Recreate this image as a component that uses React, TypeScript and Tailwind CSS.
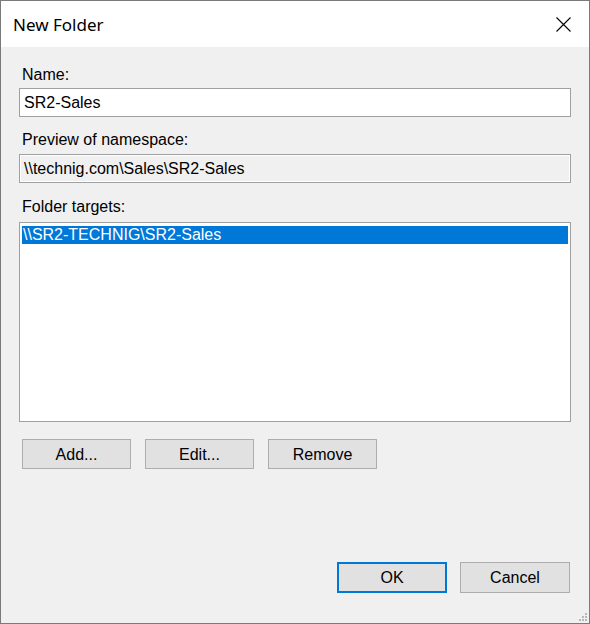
export default function App() {
  const font = { fontFamily: '"Liberation Sans", Arial, sans-serif' };

  return (
    <div
      className="w-[590px] h-[624px] flex flex-col border border-[#7a7a7a] bg-[#f0f0f0] text-black text-[16px] leading-[18px]"
      style={font}
    >
      {/* Title bar */}
      <div className="h-[46px] bg-white flex items-center justify-between pl-[12px] pr-[18px]">
        <span className="text-[17px] pt-[1px]" style={{ fontFamily: '"Noto Sans", "Open Sans", sans-serif' }}>
          New Folder
        </span>
        <svg width="15" height="15" viewBox="0 0 15 15" className="mt-[1px]">
          <path d="M0.5 0.5 L14.5 14.5 M14.5 0.5 L0.5 14.5" stroke="#000" strokeWidth="1.1" fill="none" />
        </svg>
      </div>

      {/* Body */}
      <div className="flex-1 flex flex-col pl-[18px] pr-[18px] pt-[19px] pb-[30px]">
        <label className="pl-[3px]">Name:</label>
        <div className="mt-[4px] h-[29px] bg-white border border-[#a0a0a0] flex items-center pl-[4px] pt-[1px]">
          SR2-Sales
        </div>

        <label className="pl-[3px] mt-[14px]">Preview of namespace:</label>
        <div className="mt-[5px] h-[29px] border border-[#a0a0a0] shadow-[inset_1px_1px_0_#fff,inset_-1px_-1px_0_#fff] flex items-center pl-[4px] pt-[1px]">
          \\technig.com\Sales\SR2-Sales
        </div>

        <label className="pl-[3px] mt-[15px]">Folder targets:</label>
        <div className="mt-[6px] h-[200px] bg-white border border-[#a0a0a0] px-[2px] pt-[3px]">
          <div className="h-[18px] bg-[#0078d7] text-white pl-[1px] flex items-center">
            \\SR2-TECHNIG\SR2-Sales
          </div>
        </div>

        <div className="mt-[17px] flex gap-[14px] pl-[3px]">
          <button className="w-[109px] h-[30px] bg-[#e1e1e1] border border-[#adadad] pt-[1px]">Add...</button>
          <button className="w-[109px] h-[30px] bg-[#e1e1e1] border border-[#adadad] pt-[1px]">Edit...</button>
          <button className="w-[109px] h-[30px] bg-[#e1e1e1] border border-[#adadad] pt-[1px]">Remove</button>
        </div>

        <div className="mt-auto flex justify-end gap-[13px] pr-[1px]">
          <button className="w-[110px] h-[31px] bg-[#e1e1e1] border-2 border-[#0078d7]">OK</button>
          <button className="w-[110px] h-[31px] bg-[#e1e1e1] border border-[#adadad]">Cancel</button>
        </div>
      </div>

      {/* Resize grip */}
      <div className="relative">
        <svg width="10" height="10" viewBox="0 0 10 10" className="absolute right-[2px] bottom-[1px]">
          {[
            [8, 0], [8, 3], [5, 3], [8, 6], [5, 6], [2, 6],
          ].map(([x, y], i) => (
            <rect key={i} x={x} y={y + 1} width="2" height="2" fill="#b8b8b8" />
          ))}
        </svg>
      </div>
    </div>
  );
}
